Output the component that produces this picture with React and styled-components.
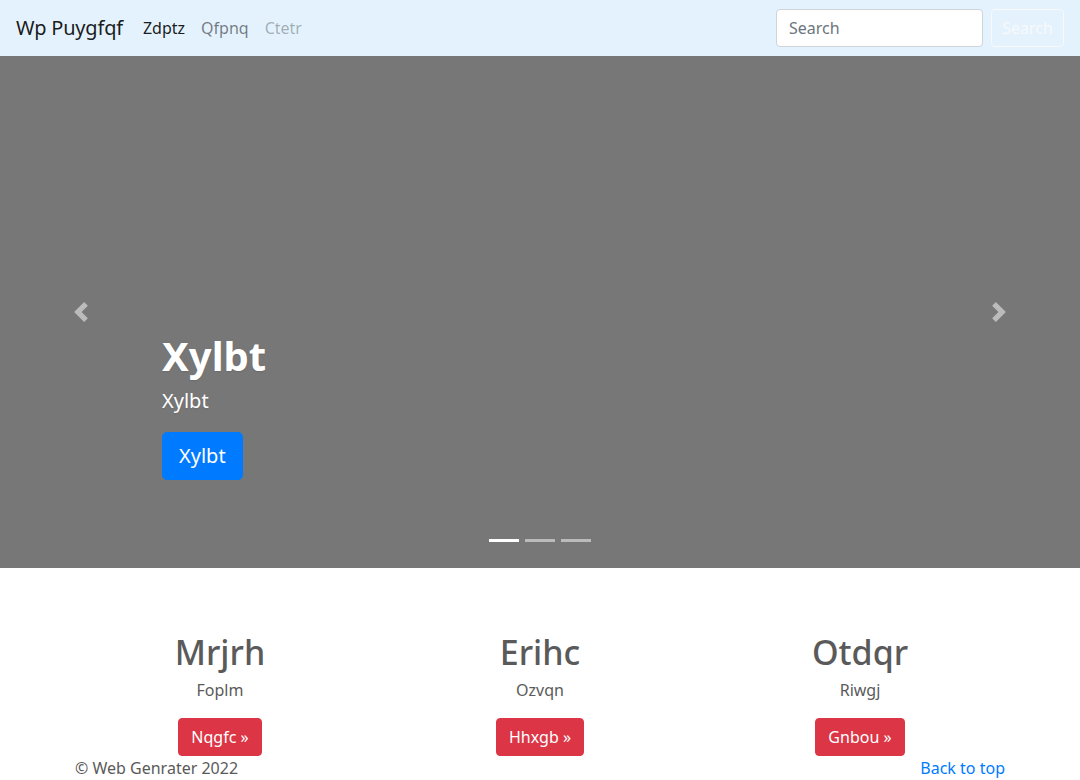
import React from 'react';
import styled, { createGlobalStyle } from 'styled-components';

const GlobalStyle = createGlobalStyle`
  * {
    box-sizing: border-box;
  }
  body {
    margin: 0;
    font-family: "Noto Sans", "Open Sans", sans-serif;
    font-size: 16px;
    line-height: 1.5;
    color: #5a5a5a;
    background: #fff;
    overflow: hidden;
  }
`;

const Navbar = styled.nav`
  display: flex;
  align-items: center;
  height: 56px;
  padding: 0.5rem 1rem;
  background: #e3f2fd;
`;

const Brand = styled.a`
  font-size: 20px;
  line-height: 30px;
  color: rgba(0, 0, 0, 0.9);
  margin-right: 0.75rem;
  letter-spacing: -0.2px;
  text-decoration: none;
`;

const NavList = styled.div`
  display: flex;
  flex: 1;
`;

const NavLink = styled.a`
  padding: 0.5rem;
  color: ${props =>
    props.active ? 'rgba(0, 0, 0, 0.9)' : props.disabled ? 'rgba(0, 0, 0, 0.3)' : 'rgba(0, 0, 0, 0.5)'};
  text-decoration: none;
`;

const SearchForm = styled.form`
  display: flex;
  gap: 8px;
`;

const SearchInput = styled.input`
  width: 207px;
  height: 38px;
  padding: 0.375rem 0.75rem;
  font: inherit;
  line-height: 24px;
  color: #495057;
  background: #fff;
  border: 1px solid #ced4da;
  border-radius: 0.25rem;
  &::placeholder {
    color: #6c757d;
  }
`;

const OutlineButton = styled.button`
  width: 73px;
  height: 38px;
  padding: 0;
  font: inherit;
  color: #f8f9fa;
  background: transparent;
  border: 1px solid #f8f9fa;
  border-radius: 0.25rem;
`;

const Carousel = styled.div`
  position: relative;
  height: 512px;
  background: #777;
  display: flex;
  align-items: flex-end;
  margin-bottom: 64px;
`;

const Caption = styled.div`
  padding: 0 15% 88px;
  color: #fff;
  text-shadow: 0 1px 2px rgba(0, 0, 0, 0.1);
`;

const CaptionTitle = styled.h1`
  margin: 0 0 0.4rem;
  font-size: 40px;
  line-height: 1.2;
  font-weight: 700;
`;

const CaptionText = styled.p`
  margin: 0 0 1rem;
  font-size: 20px;
  line-height: 1.5;
`;

const LargeButton = styled.a`
  display: inline-block;
  padding: 0.5rem 1rem;
  font-size: 20px;
  line-height: 1.5;
  color: #fff;
  background: #007bff;
  border: 1px solid #007bff;
  border-radius: 0.3rem;
  text-decoration: none;
  text-shadow: none;
`;

const Control = styled.a`
  position: absolute;
  top: 0;
  bottom: 0;
  ${props => (props.side === 'prev' ? 'left: 0;' : 'right: 0;')}
  width: 15%;
  display: flex;
  align-items: center;
  justify-content: center;
  opacity: 0.5;
`;

const Indicators = styled.ol`
  position: absolute;
  left: 0;
  right: 0;
  bottom: 0;
  display: flex;
  justify-content: center;
  list-style: none;
  margin: 0 15% 1rem;
  padding: 0;
`;

const Indicator = styled.li`
  width: 30px;
  height: 3px;
  margin: 10px 3px;
  background: #fff;
  opacity: ${props => (props.active ? 1 : 0.5)};
`;

const Container = styled.div`
  width: 960px;
  margin: 0 auto;
  padding: 0 15px;
`;

const Row = styled.div`
  display: grid;
  grid-template-columns: repeat(3, 1fr);
  margin: 0 -15px;
`;

const Feature = styled.div`
  padding: 0 15px;
  text-align: center;
`;

const FeatureTitle = styled.h2`
  margin: 0 0 5px;
  font-size: 34px;
  line-height: 1.2;
  font-weight: 500;
  color: #5a5a5a;
`;

const FeatureText = styled.p`
  margin: 0 0 16px;
`;

const DangerButton = styled.a`
  display: inline-block;
  padding: 0.375rem 0.75rem;
  color: #fff;
  background: #dc3545;
  border: 1px solid #dc3545;
  border-radius: 0.25rem;
  text-decoration: none;
`;

const Footer = styled.footer`
  display: flex;
  justify-content: space-between;
`;

const TopLink = styled.a`
  color: #007bff;
  text-decoration: none;
`;

const Chevron = ({ dir }) => (
  <svg width="20" height="20" viewBox="0 0 8 8" fill="#fff">
    {dir === 'prev' ? (
      <path d="M5.25 0l-4 4 4 4 1.5-1.5L4.25 4l2.5-2.5L5.25 0z" />
    ) : (
      <path d="M2.75 0l-1.5 1.5L3.75 4l-2.5 2.5L2.75 8l4-4-4-4z" />
    )}
  </svg>
);

const features = [
  { title: 'Mrjrh', text: 'Foplm', button: 'Nqgfc' },
  { title: 'Erihc', text: 'Ozvqn', button: 'Hhxgb' },
  { title: 'Otdqr', text: 'Riwgj', button: 'Gnbou' },
];

export default function App() {
  return (
    <>
      <GlobalStyle />
      <Navbar>
        <Brand href="#">Wp Puygfqf</Brand>
        <NavList>
          <NavLink href="#" active>
            Zdptz
          </NavLink>
          <NavLink href="#">Qfpnq</NavLink>
          <NavLink disabled>Ctetr</NavLink>
        </NavList>
        <SearchForm onSubmit={e => e.preventDefault()}>
          <SearchInput type="text" placeholder="Search" />
          <OutlineButton type="submit">Search</OutlineButton>
        </SearchForm>
      </Navbar>
      <Carousel>
        <Caption>
          <CaptionTitle>Xylbt</CaptionTitle>
          <CaptionText>Xylbt</CaptionText>
          <LargeButton href="#">Xylbt</LargeButton>
        </Caption>
        <Indicators>
          <Indicator active />
          <Indicator />
          <Indicator />
        </Indicators>
        <Control side="prev" href="#">
          <Chevron dir="prev" />
        </Control>
        <Control side="next" href="#">
          <Chevron dir="next" />
        </Control>
      </Carousel>
      <Container>
        <Row>
          {features.map(f => (
            <Feature key={f.title}>
              <FeatureTitle>{f.title}</FeatureTitle>
              <FeatureText>{f.text}</FeatureText>
              <DangerButton href="#">{f.button} &raquo;</DangerButton>
            </Feature>
          ))}
        </Row>
        <Footer>
          <span>&copy; Web Genrater 2022</span>
          <TopLink href="#">Back to top</TopLink>
        </Footer>
      </Container>
    </>
  );
}
